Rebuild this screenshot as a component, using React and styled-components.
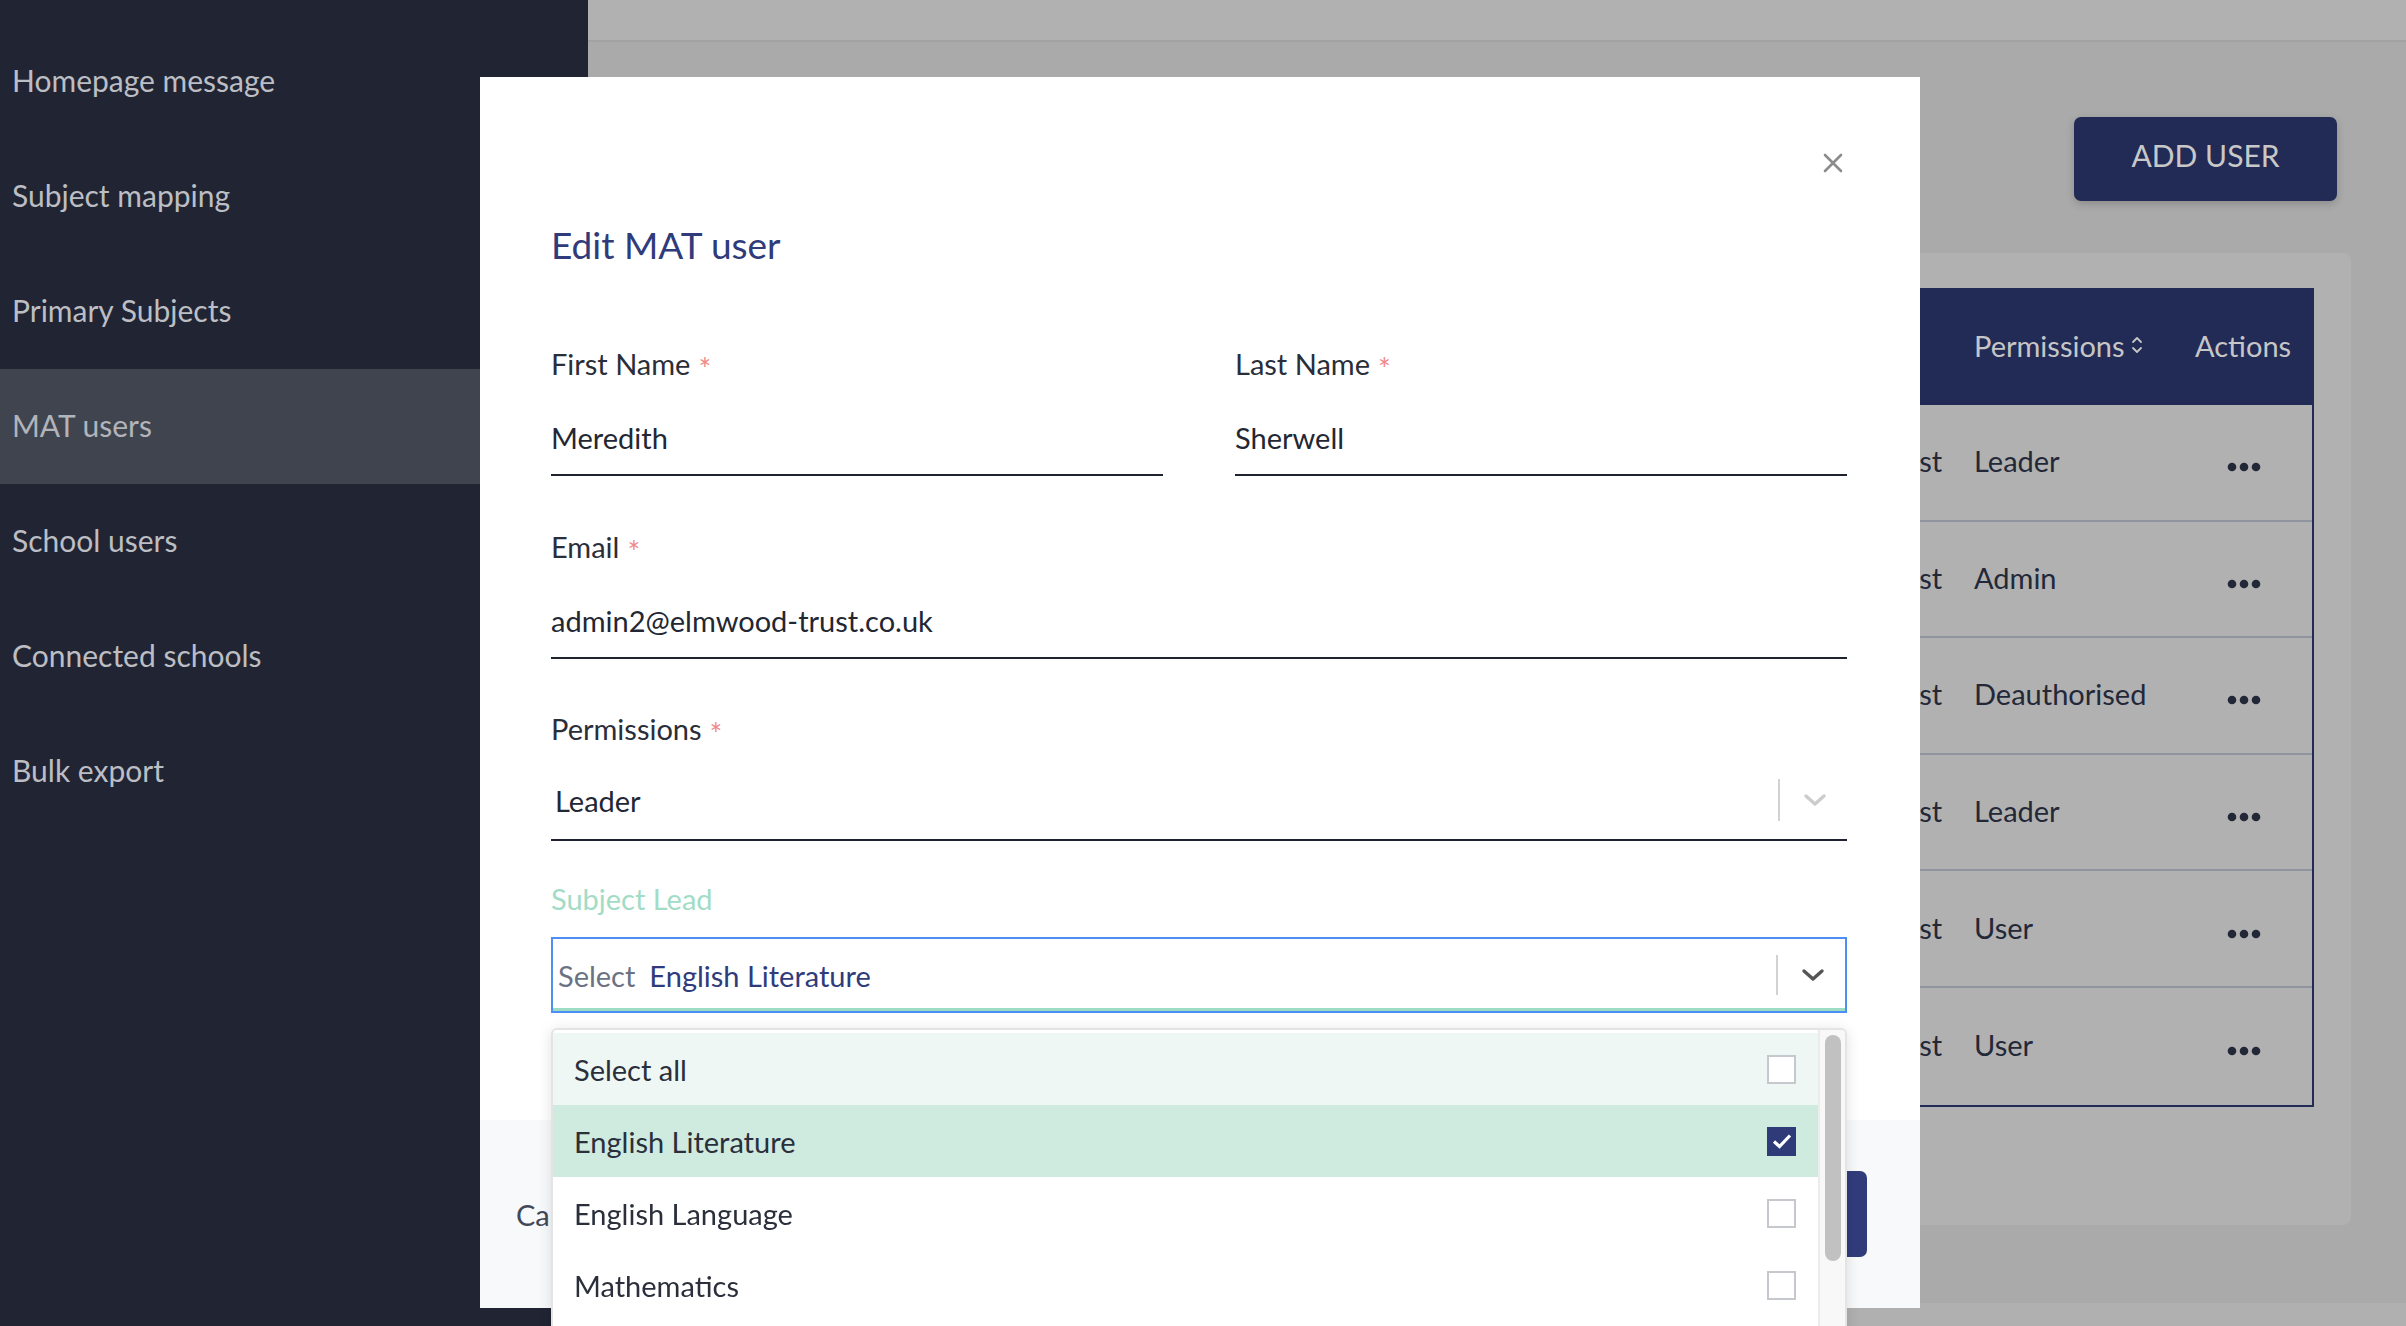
import React from 'react'
import styled, { createGlobalStyle } from 'styled-components'

const GlobalStyle = createGlobalStyle`
  html, body {
    margin: 0;
    padding: 0;
    height: 100%;
    overflow: hidden;
  }
  body {
    font-family: Lato, "Open Sans", sans-serif;
  }
  * { box-sizing: border-box; }
`

const Page = styled.div`
  display: flex;
  width: 100vw;
  height: 100vh;
`

const Sidebar = styled.nav`
  width: 588px;
  flex-shrink: 0;
  background-color: #212533;
  padding-top: 24px;
`

const NavItem = styled.div`
  height: 115px;
  display: flex;
  align-items: center;
  padding: 0 0 3px 12px;
  font-size: 30px;
  color: ${p => (p.$active ? '#b1b4ba' : '#bcbec4')};
  background-color: ${p => (p.$active ? '#40444e' : 'transparent')};
`

const Main = styled.main`
  flex: 1;
  display: flex;
  flex-direction: column;
  background-color: #aaaaaa;
`

const TopBar = styled.div`
  height: 42px;
  background-color: #b1b1b1;
  border-bottom: 2px solid #a2a2a2;
`

const Toolbar = styled.div`
  display: flex;
  justify-content: flex-end;
  padding: 75px 69px 0 0;
`

const AddButton = styled.button`
  width: 263px;
  height: 84px;
  padding: 0 0 8px;
  border: none;
  border-radius: 7px;
  background-color: #222a56;
  color: #c8c8c8;
  font-family: Lato, sans-serif;
  font-size: 30px;
  box-shadow: 0 3px 8px rgba(0, 0, 0, 0.18);
`

const Card = styled.section`
  margin: 52px 55px 0 40px;
  padding: 35px 37px 118px 40px;
  background-color: #b1b1b1;
  border-radius: 8px;
`

const Table = styled.div`
  border-right: 2px solid #222a56;
  border-bottom: 2px solid #222a56;
`

const TableRow = styled.div`
  display: grid;
  grid-template-columns: 1fr 1fr 221px 221px 117px;
  align-items: center;
  height: ${p => (p.$head ? '117px' : '116.6px')};
  padding-bottom: 3px;
  background-color: ${p => (p.$head ? '#222a56' : 'transparent')};
  color: ${p => (p.$head ? '#c6c6c6' : '#232838')};
  border-bottom: ${p => (p.$head || p.$last ? 'none' : '2px solid #8f949f')};
  font-size: 29px;
`

const HeadCell = styled.div`
  display: flex;
  align-items: center;
  gap: 6px;
`

const Cell = styled.div`
  white-space: nowrap;
`

const BottomStrip = styled.div`
  margin-top: auto;
  height: 23px;
  background-color: #b0b0b0;
`

const Overlay = styled.div`
  position: fixed;
  inset: 0;
  display: flex;
  justify-content: center;
  align-items: flex-start;
  padding: 77px 6px 0 0;
`

const Modal = styled.div`
  position: relative;
  width: 1440px;
  height: 1231px;
  background-color: #ffffff;
  display: flex;
  flex-direction: column;
`

const CloseButton = styled.button`
  position: absolute;
  top: 74px;
  right: 75px;
  width: 24px;
  height: 24px;
  padding: 0;
  border: none;
  background: none;
  display: flex;
  align-items: center;
  justify-content: center;
`

const Body = styled.div`
  flex: 1;
  padding: 146px 73px 0 71px;
`

const Title = styled.h2`
  margin: 0;
  font-size: 37px;
  line-height: 44px;
  font-weight: 400;
  color: #2f3b7a;
`

const TwoCols = styled.div`
  display: grid;
  grid-template-columns: 1fr 1fr;
  column-gap: 72px;
  margin-top: 79px;
`

const Field = styled.div`
  margin-top: ${p => p.$gap || 0}px;
  position: relative;
`

const Label = styled.div`
  font-size: 29px;
  line-height: 36px;
  color: ${p => (p.$accent ? '#a3dcc6' : '#2a2e39')};
`

const Star = styled.span`
  position: relative;
  top: 5px;
  color: #f08a8a;
  font-size: 30px;
  line-height: 1;
  margin-left: 8px;
`

const Input = styled.div`
  margin-top: 20px;
  height: 74px;
  display: flex;
  align-items: center;
  border-bottom: 2px solid #1f2330;
  font-size: 29px;
  color: #222733;
  padding: ${p => (p.$inset ? '0 0 6px 4px' : '0 0 2px')};
`

const Grow = styled.div`
  flex: 1;
`

const Divider = styled.div`
  width: 2px;
  height: ${p => p.$h}px;
  background-color: #d2d2d2;
`

const ChevronBox = styled.div`
  width: 67px;
  display: flex;
  justify-content: center;
  padding-left: 2px;
`

const FocusSelect = styled.div`
  margin-top: 20px;
  height: 76px;
  display: flex;
  align-items: center;
  border: 2px solid #4d8ff2;
  box-shadow: inset 0 -3px 0 #9ddcc4;
  padding-left: 5px;
  font-size: 29px;
`

const Placeholder = styled.span`
  color: #6b7283;
  margin-right: 14px;
`

const Chosen = styled.span`
  color: #2f3b7a;
`

const Menu = styled.div`
  position: absolute;
  left: 0;
  right: 0;
  top: calc(100% + 15px);
  height: 330px;
  display: flex;
  background-color: #ffffff;
  border: 2px solid #e4e4e4;
  border-radius: 6px;
  box-shadow: 0 2px 14px rgba(0, 0, 0, 0.12);
  overflow: hidden;
`

const MenuList = styled.div`
  flex: 1;
  padding-top: 3px;
`

const MenuItem = styled.div`
  height: 72px;
  display: flex;
  align-items: center;
  justify-content: space-between;
  padding: 0 22px 0 21px;
  font-size: 29px;
  color: #2a2f3b;
  background-color: ${p => p.$bg || '#ffffff'};
`

const Check = styled.div`
  width: 29px;
  height: 29px;
  border: 2px solid ${p => (p.$on ? '#2f3b78' : '#c5c8cc')};
  background-color: ${p => (p.$on ? '#2f3b78' : '#ffffff')};
  display: flex;
  align-items: center;
  justify-content: center;
`

const ScrollTrack = styled.div`
  width: 27px;
  background-color: #f8f8f8;
  border-left: 2px solid #ececec;
  padding: 5px 4px 0 5px;
`

const ScrollThumb = styled.div`
  height: 226px;
  border-radius: 8px;
  background-color: #c1c1c1;
`

const Footer = styled.div`
  height: 188px;
  background-color: #f8f9fa;
  display: flex;
  align-items: center;
  justify-content: space-between;
  padding: 0 53px 0 36px;
`

const CancelText = styled.span`
  font-size: 29px;
  color: #414958;
`

const SaveButton = styled.button`
  width: 220px;
  height: 86px;
  border: none;
  border-radius: 7px;
  background-color: #313c7b;
  color: #ffffff;
  font-family: Lato, sans-serif;
  font-size: 29px;
`

const Chevron = ({ color }) => (
  <svg width="24" height="14" viewBox="0 0 24 14">
    <path d="M3 3 L12 11 L21 3" fill="none" stroke={color} strokeWidth="3.4" strokeLinecap="round" strokeLinejoin="round" />
  </svg>
)

const SortIcon = () => (
  <svg width="12" height="18" viewBox="0 0 12 18">
    <path d="M2 6 L6 2 L10 6 M2 12 L6 16 L10 12" fill="none" stroke="#c6c6c6" strokeWidth="1.8" strokeLinecap="round" strokeLinejoin="round" />
  </svg>
)

const Dots = () => (
  <svg width="34" height="10" viewBox="0 0 34 10" style={{ marginLeft: 32 }}>
    <circle cx="5" cy="5" r="4.3" fill="#232838" />
    <circle cx="17" cy="5" r="4.3" fill="#232838" />
    <circle cx="29" cy="5" r="4.3" fill="#232838" />
  </svg>
)

const navItems = [
  'Homepage message',
  'Subject mapping',
  'Primary Subjects',
  'MAT users',
  'School users',
  'Connected schools',
  'Bulk export',
]

const users = [
  ['Meredith Sherwell', 'admin2@elmwood-trust.co.uk', 'Leader'],
  ['Oliver Grant', 'admin@elmwood-trust.co.uk', 'Admin'],
  ['Hannah Price', 'hprice@elmwood-trust.co.uk', 'Deauthorised'],
  ['Samuel Hart', 'shart@elmwood-trust.co.uk', 'Leader'],
  ['Amelia Stone', 'astone@elmwood-trust.co.uk', 'User'],
  ['Jacob Reed', 'jreed@elmwood-trust.co.uk', 'User'],
]

const subjects = [
  { name: 'Select all', bg: '#eff7f4', on: false },
  { name: 'English Literature', bg: '#cfeadf', on: true },
  { name: 'English Language', on: false },
  { name: 'Mathematics', on: false },
]

function App() {
  return (
    <>
      <GlobalStyle />
      <Page>
        <Sidebar>
          {navItems.map(item => (
            <NavItem key={item} $active={item === 'MAT users'}>{item}</NavItem>
          ))}
        </Sidebar>
        <Main>
          <TopBar />
          <Toolbar>
            <AddButton>ADD USER</AddButton>
          </Toolbar>
          <Card>
            <Table>
              <TableRow $head>
                <HeadCell>Name</HeadCell>
                <HeadCell>Email</HeadCell>
                <HeadCell>Trust</HeadCell>
                <HeadCell>Permissions<SortIcon /></HeadCell>
                <HeadCell>Actions</HeadCell>
              </TableRow>
              {users.map((u, i) => (
                <TableRow key={u[1]} $last={i === users.length - 1}>
                  <Cell>{u[0]}</Cell>
                  <Cell>{u[1]}</Cell>
                  <Cell>Elmwood Trust</Cell>
                  <Cell>{u[2]}</Cell>
                  <Cell><Dots /></Cell>
                </TableRow>
              ))}
            </Table>
          </Card>
          <BottomStrip />
        </Main>
      </Page>

      <Overlay>
        <Modal>
          <CloseButton aria-label="Close">
            <svg width="22" height="22" viewBox="0 0 22 22">
              <path d="M3 3 L19 19 M19 3 L3 19" stroke="#8c8c8c" strokeWidth="2.6" strokeLinecap="round" />
            </svg>
          </CloseButton>
          <Body>
            <Title>Edit MAT user</Title>
            <TwoCols>
              <Field>
                <Label>First Name<Star>*</Star></Label>
                <Input>Meredith</Input>
              </Field>
              <Field>
                <Label>Last Name<Star>*</Star></Label>
                <Input>Sherwell</Input>
              </Field>
            </TwoCols>
            <Field $gap={53}>
              <Label>Email<Star>*</Star></Label>
              <Input>admin2@elmwood-trust.co.uk</Input>
            </Field>
            <Field $gap={52}>
              <Label>Permissions<Star>*</Star></Label>
              <Input $inset>
                <Grow>Leader</Grow>
                <Divider $h={42} />
                <ChevronBox><Chevron color="#cccccc" /></ChevronBox>
              </Input>
            </Field>
            <Field $gap={40}>
              <Label $accent>Subject Lead</Label>
              <FocusSelect>
                <Grow>
                  <Placeholder>Select</Placeholder>
                  <Chosen>English Literature</Chosen>
                </Grow>
                <Divider $h={40} />
                <ChevronBox><Chevron color="#555555" /></ChevronBox>
              </FocusSelect>
              <Menu>
                <MenuList>
                  {subjects.map(s => (
                    <MenuItem key={s.name} $bg={s.bg}>
                      {s.name}
                      <Check $on={s.on}>
                        {s.on && (
                          <svg width="22" height="18" viewBox="0 0 22 18">
                            <path d="M3 9.5 L8.5 14.5 L19 3.5" fill="none" stroke="#ffffff" strokeWidth="3.2" />
                          </svg>
                        )}
                      </Check>
                    </MenuItem>
                  ))}
                </MenuList>
                <ScrollTrack>
                  <ScrollThumb />
                </ScrollTrack>
              </Menu>
            </Field>
          </Body>
          <Footer>
            <CancelText>Cancel</CancelText>
            <SaveButton>Save</SaveButton>
          </Footer>
        </Modal>
      </Overlay>
    </>
  )
}

export default App
